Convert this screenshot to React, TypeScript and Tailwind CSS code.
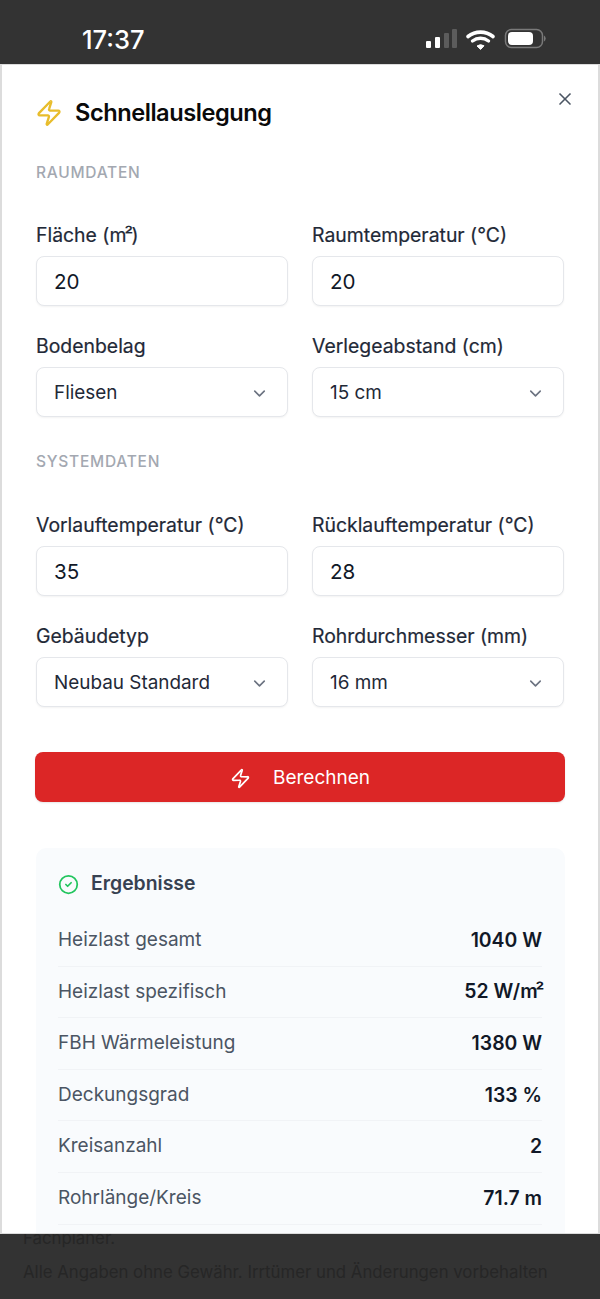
import React from "react";
import { Zap, X, ChevronDown, CircleCheck } from "lucide-react";

const font = { fontFamily: "Inter, 'Liberation Sans', sans-serif" };

function Field({ label, value, select }: { label: React.ReactNode; value: string; select?: boolean }) {
  return (
    <div className="flex flex-col gap-[9px]">
      <div className="h-[24px] leading-[24px] text-[19.4px] font-normal text-[#1f2937] whitespace-nowrap [-webkit-text-stroke:0.2px_#1f2937]">{label}</div>
      <div className="h-[50px] rounded-[8px] border border-[#e5e7eb] bg-white shadow-[0_1px_2px_rgba(0,0,0,0.05)] pl-[17px] pr-[18px] pt-[2px] flex items-center justify-between">
        <span className={select ? "text-[18.9px] text-[#1f2937]" : "text-[20.6px] text-[#111827]"}>{value}</span>
        {select && <ChevronDown size={19} className="text-[#6b7280]" strokeWidth={2} />}
      </div>
    </div>
  );
}

function Row({ label, value }: { label: string; value: React.ReactNode }) {
  return (
    <div className="h-[51.6px] flex items-center justify-between border-b border-[#f1f3f6]">
      <span className="text-[19px] text-[#4b5563]">{label}</span>
      <span className="text-[19.4px] font-semibold text-[#111827]">{value}</span>
    </div>
  );
}

function SectionTitle({ children }: { children: React.ReactNode }) {
  return <div className="text-[15.5px] leading-[20px] font-medium tracking-[0.75px] text-[#a3a8b1]">{children}</div>;
}

export default function App() {
  return (
    <div style={font} className="w-[600px] h-[1299px] bg-[#333333] overflow-hidden flex flex-col">
      <div className="h-[64px] shrink-0 flex items-end pb-[9px] pl-[82px] pr-[53px] justify-between">
        <span className="text-[25.5px] leading-[30px] font-medium text-white">17:37</span>
        <svg width="124" height="24" viewBox="0 0 124 24" className="mb-[3px]">
          <rect x="3" y="13" width="5" height="7" rx="1" fill="#fff" />
          <rect x="12" y="9" width="5" height="11" rx="1" fill="#fff" />
          <rect x="21" y="5" width="5" height="15" rx="1" fill="#5c5c5c" />
          <rect x="29" y="1" width="5" height="19" rx="1" fill="#5c5c5c" />
          <path d="M45 8.5a20 20 0 0 1 25 0" fill="none" stroke="#fff" strokeWidth="3.6" strokeLinecap="round" />
          <path d="M49.5 13a13 13 0 0 1 16 0" fill="none" stroke="#fff" strokeWidth="3.4" strokeLinecap="round" />
          <path d="M54 18a6 6 0 0 1 7 -0.2l-3.4 3.6z" fill="#fff" stroke="#fff" strokeWidth="1" strokeLinejoin="round" />
          <rect x="82.5" y="1.5" width="37" height="18" rx="6" fill="none" stroke="#7a7a7a" strokeWidth="1.5" />
          <rect x="85" y="4" width="25" height="13" rx="4" fill="#fff" />
          <path d="M121 7.5a3.5 3.5 0 0 1 0 6z" fill="#7a7a7a" />
        </svg>
      </div>
      <div className="relative z-10 h-[1170px] shrink-0 bg-white border-x-2 border-y border-[#dcdcdc] overflow-hidden px-[34px]">
        <button className="absolute right-[23px] top-[24px] text-[#4b5563]"><X size={20} strokeWidth={2} /></button>
        <div className="flex items-center gap-[12px] ml-[-1px] mt-[33px] h-[30px]">
          <Zap size={28} className="text-[#e8bd2c]" strokeWidth={2} />
          <span className="text-[23.6px] font-semibold text-[#0a0a0a] tracking-[-0.45px]">Schnellauslegung</span>
        </div>
        <div className="mt-[35px]"><SectionTitle>RAUMDATEN</SectionTitle></div>
        <div className="mt-[40px] grid grid-cols-2 gap-x-[24px] gap-y-[28px] w-[528px]">
          <Field label={<>Fläche (<span className="tracking-[-1.8px]">m²</span>)</>} value="20" />
          <Field label="Raumtemperatur (°C)" value="20" />
          <Field label="Bodenbelag" value="Fliesen" select />
          <Field label="Verlegeabstand (cm)" value="15 cm" select />
        </div>
        <div className="mt-[35px]"><SectionTitle>SYSTEMDATEN</SectionTitle></div>
        <div className="mt-[41px] grid grid-cols-2 gap-x-[24px] gap-y-[28px] w-[528px]">
          <Field label="Vorlauftemperatur (°C)" value="35" />
          <Field label="Rücklauftemperatur (°C)" value="28" />
          <Field label="Gebäudetyp" value="Neubau Standard" select />
          <Field label="Rohrdurchmesser (mm)" value="16 mm" select />
        </div>
        <button className="mt-[45px] ml-[-1px] w-[530px] h-[50px] pt-[2px] rounded-[8px] bg-[#dc2626] text-white flex items-center justify-center gap-[22px] shadow-[0_1px_2px_rgba(0,0,0,0.1)]">
          <Zap size={21} strokeWidth={2} />
          <span className="text-[19px]">Berechnen</span>
        </button>
        <div className="mt-[46px] w-[529px] rounded-t-[10px] bg-[#f9fbfd] pl-[22px] pr-[23px] pt-[23px] pb-[20px]">
          <div className="flex items-center gap-[12px] h-[26px]">
            <CircleCheck size={21} className="text-[#22c55e]" strokeWidth={2} />
            <span className="text-[19.4px] font-semibold text-[#374151]">Ergebnisse</span>
          </div>
          <div className="mt-[18px]">
            <Row label="Heizlast gesamt" value="1040 W" />
            <Row label="Heizlast spezifisch" value={<>52 W/<span className="tracking-[-2.2px]">m²</span></>} />
            <Row label="FBH Wärmeleistung" value="1380 W" />
            <Row label="Deckungsgrad" value="133 %" />
            <Row label="Kreisanzahl" value="2" />
            <Row label="Rohrlänge/Kreis" value="71.7 m" />
          </div>
        </div>
      </div>
      <div className="mt-[-13px] pl-[23px] text-[16.8px] leading-[34px] text-[#262626] whitespace-nowrap">
        <div>Fachplaner.</div>
        <div>Alle Angaben ohne Gewähr. Irrtümer und Änderungen vorbehalten</div>
      </div>
    </div>
  );
}
